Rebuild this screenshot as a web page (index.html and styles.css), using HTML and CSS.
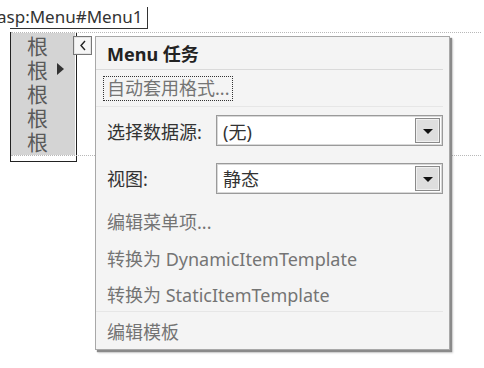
FILE: index.html
```html
<!DOCTYPE html>
<html lang="zh-CN">
<head>
    <meta charset="UTF-8">
    <title>Menu 任务</title>
    <link rel="stylesheet" href="styles.css">
</head>
<body>
    <div class="surface">
        <div class="tag-label"><span>asp:Menu#Menu1</span></div>
        <div class="frame">
            <div class="design-area">
                <ul class="menu-items">
                    <li>根</li>
                    <li>根<span class="sub-arrow"></span></li>
                    <li>根</li>
                    <li>根</li>
                    <li>根</li>
                </ul>
            </div>
        </div>

        <button class="smart-tag" type="button">
            <svg width="8" height="11" viewBox="0 0 8 11"><polyline points="6,1 2,5.5 6,10" fill="none" stroke="#222" stroke-width="1.4"/></svg>
        </button>

        <div class="tasks">
            <div class="tasks-header">Menu 任务</div>
            <div class="task-row">
                <a class="task-link focused" href="#">自动套用格式...</a>
            </div>
            <div class="field-row first">
                <label>选择数据源:</label>
                <div class="combo"><span>(无)</span><i class="drop"></i></div>
            </div>
            <div class="field-row">
                <label>视图:</label>
                <div class="combo"><span>静态</span><i class="drop"></i></div>
            </div>
            <div class="task-row link-row"><a class="task-link" href="#">编辑菜单项...</a></div>
            <div class="task-row link-row"><a class="task-link" href="#">转换为 DynamicItemTemplate</a></div>
            <div class="task-row link-row last"><a class="task-link" href="#">转换为 StaticItemTemplate</a></div>
            <div class="task-row link-row bottom"><a class="task-link" href="#">编辑模板</a></div>
        </div>
    </div>
</body>
</html>
```

FILE: styles.css
```css
body {
    margin: 0;
    background-color: white;
    font-family: "Noto Sans", "Noto Sans CJK SC", sans-serif;
    width: 484px;
    height: 368px;
    overflow: hidden;
}

.surface {
    position: relative;
    padding-top: 7px;
    padding-left: 10px;
}

.tag-label {
    width: 137px;
    height: 21px;
    border-right: 1px solid #333;
    border-bottom: 1px solid #333;
    font-size: 17px;
    line-height: 20px;
    color: #333;
    white-space: nowrap;
}

.tag-label span {
    margin-left: -13px;
}

.frame {
    width: 65px;
    height: 129px;
    border-left: 1px solid #222;
    border-right: 1px solid #222;
    border-bottom: 1px solid #222;
}

.design-area {
    width: 470px;
    margin-top: 3px;
    border-top: 1px dotted #b8b8b8;
    border-bottom: 1px dotted #b8b8b8;
}

.menu-items {
    list-style: none;
    margin: 0;
    padding: 0 0 2px 0;
    width: 64px;
    background-color: #d4d4d4;
}

.menu-items li {
    position: relative;
    height: 24px;
    padding-left: 16px;
    font-family: "Noto Sans CJK SC", sans-serif;
    font-size: 21px;
    line-height: 24px;
    color: #5a5a5a;
}

.sub-arrow {
    position: absolute;
    left: 46px;
    top: 6px;
    border-left: 7px solid #333;
    border-top: 6px solid transparent;
    border-bottom: 6px solid transparent;
}

.smart-tag {
    position: absolute;
    left: 73px;
    top: 36px;
    width: 19px;
    height: 19px;
    padding: 0;
    display: flex;
    align-items: center;
    justify-content: center;
    border: 1px solid #777;
    box-shadow: inset 0 0 0 1px #e4e4e4;
    background-color: #f6f6f6;
}

.tasks {
    position: absolute;
    left: 95px;
    top: 36px;
    width: 355px;
    height: 314px;
    box-sizing: border-box;
    border: 1px solid #a8a8a8;
    background-color: #f4f4f4;
    box-shadow: 2px 2px 1px #8a8a8a, 3px 3px 2px rgba(0, 0, 0, 0.18);
    padding: 0 6px 0 0;
}

.tasks-header {
    height: 32px;
    padding-left: 11px;
    border-bottom: 1px solid #dadada;
    font-size: 18px;
    font-weight: bold;
    line-height: 34px;
    color: #222;
}

.task-row {
    display: flex;
    align-items: center;
    height: 36px;
    padding-left: 11px;
    border-bottom: 1px solid #e6e6e6;
}

.task-link {
    font-size: 18px;
    color: #747474;
    text-decoration: none;
    white-space: nowrap;
}

.task-link.focused {
    margin-left: -4px;
    padding: 0 3px;
    border: 1px dotted #333;
    line-height: 23px;
}

.field-row {
    display: flex;
    align-items: center;
    height: 48px;
    padding-left: 11px;
}

.field-row.first {
    height: 47px;
}

.field-row label {
    width: 109px;
    font-size: 18px;
    color: #333;
}

.combo {
    display: flex;
    align-items: center;
    justify-content: space-between;
    width: 227px;
    height: 31px;
    box-sizing: border-box;
    border: 1px solid #9a9a9a;
    box-shadow: inset 0 0 0 1px #d8d8d8;
    background-color: white;
    padding: 0 2px 0 6px;
    font-size: 18px;
    color: #333;
}

.drop {
    position: relative;
    width: 25px;
    height: 25px;
    box-sizing: border-box;
    border: 1px solid #8a8a8a;
    box-shadow: inset 0 0 0 1px #f0f0f0;
    background-color: #dedede;
}

.drop::after {
    content: "";
    position: absolute;
    left: 7px;
    top: 10px;
    border-top: 5px solid #111;
    border-left: 5px solid transparent;
    border-right: 5px solid transparent;
}

.link-row {
    height: 37px;
    border-bottom: none;
}

.link-row.last {
    height: 35px;
    border-bottom: 1px solid #e6e6e6;
}

.link-row.bottom {
    height: 38px;
}
```
